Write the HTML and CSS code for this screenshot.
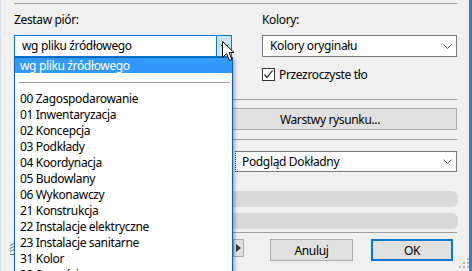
FILE: index.html
```html
<!DOCTYPE html>
<html lang="pl">
<head>
<meta charset="utf-8">
<title>Zestaw piór</title>
<link rel="stylesheet" href="styles.css">
</head>
<body>
<div class="window">
  <div class="panel">
    <div class="sep"></div>
    <div class="top-grid">
      <div class="col">
        <div class="label">Zestaw piór:</div>
        <div class="combo open">
          <span class="combo-text">wg pliku źródłowego</span>
          <span class="combo-btn hot">
            <svg width="9" height="5" viewBox="0 0 9 5"><polyline points="0.5,0.5 4.5,4.5 8.5,0.5" fill="none" stroke="#404040" stroke-width="1"/></svg>
          </span>
        </div>
      </div>
      <div class="col">
        <div class="label">Kolory:</div>
        <div class="combo">
          <span class="combo-text">Kolory oryginału</span>
          <span class="combo-btn">
            <svg width="9" height="5" viewBox="0 0 9 5"><polyline points="0.5,0.5 4.5,4.5 8.5,0.5" fill="none" stroke="#606060" stroke-width="1"/></svg>
          </span>
        </div>
        <label class="check">
          <span class="box"><svg width="11" height="11" viewBox="0 0 11 11"><polyline points="1.5,5.5 4,8.5 9.5,1.5" fill="none" stroke="#222" stroke-width="1.2"/></svg></span>
          <span>Przezroczyste tło</span>
        </label>
      </div>
    </div>
    <div class="sep s2"></div>
    <div class="layers-row">
      <div class="btn layers">Warstwy rysunku...</div>
    </div>
    <div class="sep s3"></div>
    <div class="view-row">
      <div class="combo view">
        <span class="combo-text">Podgląd Dokładny</span>
        <span class="combo-btn">
          <svg width="9" height="5" viewBox="0 0 9 5"><polyline points="0.5,0.5 4.5,4.5 8.5,0.5" fill="none" stroke="#606060" stroke-width="1"/></svg>
        </span>
      </div>
    </div>
    <div class="bar b1"></div>
    <div class="bar b2"></div>
    <div class="sep s4"></div>
    <div class="footer">
      <span class="stack-icon">
        <svg width="8" height="12" viewBox="0 0 8 12"><g fill="none" stroke="#707070" stroke-width="1"><path d="M0 2.5 L4 0.5 L8 2.5"/><path d="M0 5.5 L4 3.5 L8 5.5"/><path d="M0 8.5 L4 6.5 L8 8.5"/><path d="M0 11.5 L8 11.5"/></g></svg>
      </span>
      <span class="arrow-btn"><svg width="5" height="8" viewBox="0 0 5 8"><polygon points="0,0 5,4 0,8" fill="#333"/></svg></span>
      <div class="btn cancel">Anuluj</div>
      <div class="btn ok">OK</div>
    </div>
  </div>

  <div class="dropdown">
    <div class="item selected">wg pliku źródłowego</div>
    <div class="item-sep"><span></span></div>
    <div class="item">00 Zagospodarowanie</div>
    <div class="item">01 Inwentaryzacja</div>
    <div class="item">02 Koncepcja</div>
    <div class="item">03 Podkłady</div>
    <div class="item">04 Koordynacja</div>
    <div class="item">05 Budowlany</div>
    <div class="item">06 Wykonawczy</div>
    <div class="item">21 Konstrukcja</div>
    <div class="item">22 Instalacje elektryczne</div>
    <div class="item">23 Instalacje sanitarne</div>
    <div class="item">31 Kolor</div>
    <div class="item">32 Szarości</div>
  </div>

  <svg class="cursor" width="14" height="21" viewBox="0 0 14 21"><polygon points="0.5,0.5 0.5,16.5 4.5,12.5 7.5,19.5 10,18.5 7,11.5 12,11.5" fill="#fff" stroke="#000" stroke-width="1" stroke-linejoin="miter"/></svg>

  <svg class="grip" width="10" height="10" viewBox="0 0 10 10"><g fill="#b8b8b8"><rect x="8" y="0" width="2" height="2"/><rect x="4" y="4" width="2" height="2"/><rect x="8" y="4" width="2" height="2"/><rect x="0" y="8" width="2" height="2"/><rect x="4" y="8" width="2" height="2"/><rect x="8" y="8" width="2" height="2"/></g></svg>
</div>
</body>
</html>
```

FILE: styles.css
```css
* { box-sizing: border-box; }
html, body {
  margin: 0;
  padding: 0;
  width: 472px;
  height: 271px;
  overflow: hidden;
  background: #f0f0f0;
}
body {
  font-family: "Noto Sans", "Open Sans", sans-serif;
  font-size: 12px;
  letter-spacing: -0.35px;
  color: #000;
}
.window {
  position: relative;
  width: 472px;
  height: 271px;
  background: #f0f0f0;
  border-right: 3px solid #2b80d6;
  border-left: 1px solid #d6dde6;
  overflow: hidden;
}
.panel {
  padding: 3px 0 0 13px;
  width: 456px;
  display: flex;
  flex-direction: column;
}
.sep {
  height: 1px;
  flex: none;
  background: #a0a0a0;
  width: 443px;
}
.top-grid {
  display: grid;
  grid-template-columns: 218px 195px;
  column-gap: 30px;
  margin-top: 8px;
  height: 87px;
}
.col { display: flex; flex-direction: column; }
.label {
  height: 16px;
  line-height: 16px;
  margin-bottom: 7px;
}
.combo {
  height: 22px;
  background: #fff;
  border: 1px solid #7a7a7a;
  display: flex;
  align-items: center;
  position: relative;
}
.combo-text {
  flex: 1;
  padding-left: 7px;
  line-height: 20px;
  white-space: nowrap;
}
.combo-btn {
  width: 16px;
  height: 20px;
  display: flex;
  align-items: center;
  justify-content: center;
  margin-right: 1px;
}
.combo.open { border-color: #0078d7; }
.combo-btn.hot {
  background: #cce4f7;
  border-left: 1px solid #0078d7;
  margin-right: 0;
  width: 15px;
}
.check {
  display: flex;
  align-items: center;
  margin-top: 11px;
  height: 13px;
  gap: 4px;
}
.box {
  width: 13px;
  height: 13px;
  border: 1px solid #333;
  background: #fff;
  display: flex;
  align-items: center;
  justify-content: center;
}
.layers-row {
  display: flex;
  justify-content: flex-end;
  width: 443px;
  margin-top: 8px;
}
.btn {
  height: 22px;
  background: #e1e1e1;
  border: 1px solid #adadad;
  display: flex;
  align-items: center;
  justify-content: center;
  white-space: nowrap;
}
.layers { width: 254px; }
.s3 { margin-top: 9px; }
.view-row {
  display: flex;
  justify-content: flex-end;
  width: 443px;
  margin-top: 11px;
}
.combo.view {
  width: 222px;
  height: 21px;
  border-left: 1px dotted #333;
}
.combo.view .combo-text { padding-left: 6px; }
.bar {
  height: 16px;
  flex: none;
  background: #d9d9d9;
  border-radius: 0 6px 6px 0;
  width: 444px;
}
.b1 { margin-top: 19px; }
.b2 { margin-top: 6px; }
.s4 { margin-top: 3px; }
.footer {
  display: flex;
  align-items: flex-start;
  margin-top: 6px;
  width: 443px;
}
.stack-icon {
  margin-left: -4px;
  margin-top: 4px;
  width: 8px;
  height: 12px;
  display: flex;
}
.arrow-btn {
  margin-left: 215px;
  width: 11px;
  height: 18px;
  background: #e1e1e1;
  border: 1px solid #adadad;
  display: flex;
  align-items: center;
  justify-content: center;
}
.cancel { margin-left: 26px; width: 83px; }
.ok {
  margin-left: 18px;
  width: 82px;
  border: 2px solid #0078d7;
}
.dropdown {
  position: absolute;
  left: 13px;
  top: 57px;
  width: 219px;
  height: 240px;
  background: #fff;
  border: 1px solid #0a64b4;
  box-shadow: 2px 2px 3px rgba(0,0,0,0.28);
}
.item {
  height: 16px;
  line-height: 16px;
  padding-left: 5px;
  white-space: nowrap;
}
.item.selected {
  height: 15px;
  line-height: 15px;
  background: #3399ff;
  color: #fff;
}
.item-sep {
  height: 18px;
  display: flex;
  align-items: center;
  padding: 0 2px 0 4px;
}
.item-sep span {
  display: block;
  height: 1px;
  width: 100%;
  background: #a0a0a0;
}
.cursor {
  position: absolute;
  left: 221px;
  top: 41px;
}
.grip {
  position: absolute;
  left: 458px;
  top: 258px;
}
```
